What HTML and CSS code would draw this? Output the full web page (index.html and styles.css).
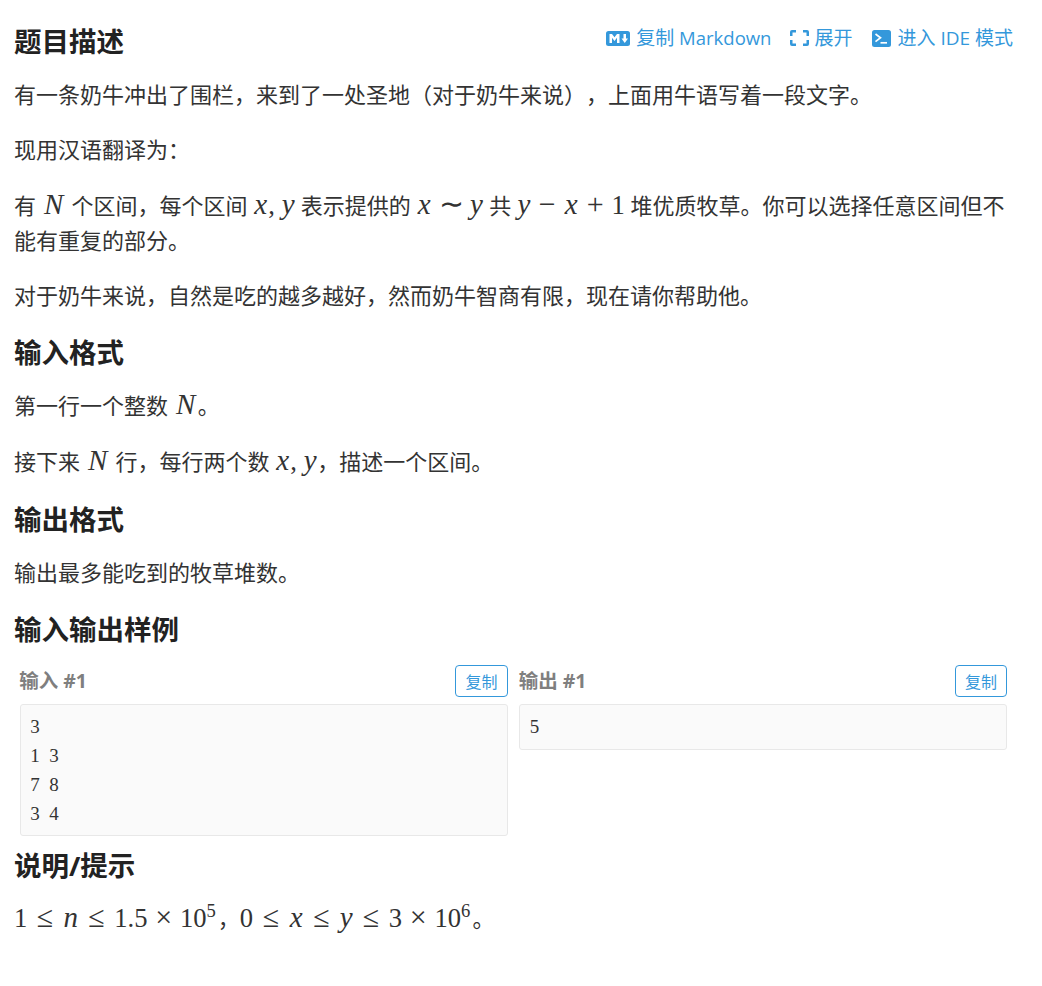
FILE: index.html
```html
<!DOCTYPE html>
<html lang="zh-CN">
<head>
<meta charset="utf-8">
<title>题目描述</title>
<link rel="stylesheet" href="styles.css">
</head>
<body>
<main class="problem">
  <header class="head">
    <h2>题目描述</h2>
    <nav class="tools">
      <a class="tool"><svg class="ico md" viewBox="0 0 24 15"><rect width="24" height="15" rx="2.500" fill="#3498db"/><path d="M3.500 12V3h2.500l2.500 3.300L11 3h2.500v9H11V6.800L8.500 10 6 6.800V12zM17.500 3h2.500v4.500h2L18.750 12 15.500 7.500h2z" fill="#fff"/></svg><span>复制 <span class="lat">Markdown</span></span></a>
      <a class="tool tool-expand"><svg class="ico ex" viewBox="0 0 19 16"><path d="M0 6V2a2 2 0 0 1 2-2h4v2.500H2.500V6zM13 0h4a2 2 0 0 1 2 2v4h-2.500V2.500H13zM19 10v4a2 2 0 0 1-2 2h-4v-2.500h3.500V10zM6 16H2a2 2 0 0 1-2-2v-4h2.500v3.500H6z" fill="#3498db"/></svg><span>展开</span></a>
      <a class="tool"><svg class="ico tm" viewBox="0 0 19 17"><rect width="19" height="17" rx="2.500" fill="#3498db"/><path d="M3.500 4 8.500 7.800 3.500 11.600" fill="none" stroke="#fff" stroke-width="1.700"/><path d="M8.500 12.800h6.500" stroke="#fff" stroke-width="1.700"/></svg><span>进入 IDE 模式</span></a>
    </nav>
  </header>
  <p>有一条奶牛冲出了围栏，来到了一处圣地（对于奶牛来说），上面用牛语写着一段文字。</p>
  <p>现用汉语翻译为：</p>
  <p>有 <i class="m vN">N</i> 个区间，每个区间 <i class="m vx">x</i><span class="r comma">,</span><i class="m vy">y</i> 表示提供的 <i class="m vx">x</i><span class="r rel tilde">∼</span><i class="m vy">y</i> 共 <i class="m vy">y</i><span class="r bin sum">−</span><i class="m vx">x</i><span class="r bin sum">+</span><span class="r">1</span> 堆优质牧草。你可以选择任意区间但不能有重复的部分。</p>
  <p>对于奶牛来说，自然是吃的越多越好，然而奶牛智商有限，现在请你帮助他。</p>
  <h2>输入格式</h2>
  <p>第一行一个整数 <i class="m vN">N</i>。</p>
  <p class="tall">接下来 <i class="m vN">N</i> 行，每行两个数 <i class="m vx">x</i><span class="r comma">,</span><i class="m vy">y</i>，描述一个区间。</p>
  <h2>输出格式</h2>
  <p>输出最多能吃到的牧草堆数。</p>
  <h2>输入输出样例</h2>
  <section class="samples">
    <div class="sample">
      <div class="sample-head"><h3>输入 #1</h3><button class="copy">复制</button></div>
      <pre class="code">3
1 3
7 8
3 4</pre>
    </div>
    <div class="sample">
      <div class="sample-head"><h3>输出 #1</h3><button class="copy">复制</button></div>
      <pre class="code">5</pre>
    </div>
  </section>
  <h2 class="note">说明/提示</h2>
  <p class="last"><span class="r">1</span><span class="r rel">≤</span><i class="m vn">n</i><span class="r rel">≤</span><span class="r">1.5</span><span class="r bin">×</span><span class="r">10<sup>5</sup></span>，<span class="r">0</span><span class="r rel">≤</span><i class="m vx">x</i><span class="r rel">≤</span><i class="m vy">y</i><span class="r rel">≤</span><span class="r">3</span><span class="r bin">×</span><span class="r">10<sup>6</sup></span>。</p>
</main>
</body>
</html>
```

FILE: styles.css
```css
* { box-sizing: border-box; }
html, body { margin: 0; padding: 0; background: #fff; }
body {
  font-family: "Open Sans", "Noto Sans CJK SC", sans-serif;
  font-size: 22px;
  line-height: 35.2px;
  color: #333;
  text-spacing-trim: space-all;
}
.problem { width: 1013px; padding: 22px 0 0 14px; }
h2 {
  margin: 22px 0 18px;
  font-size: 27.500px;
  line-height: 35.200px;
  font-weight: 700;
  color: #222;
}
.head h2 { margin-top: 2px; }
.note { margin: 12px 0 17px; }
p { margin: 0 0 20px; }
.tall { padding-bottom: 1px; }
.head { display: flex; justify-content: space-between; align-items: flex-start; }
.tools { display: flex; gap: 19px; font-size: 19px; line-height: 31px; color: #3498db; }
.tool { display: flex; align-items: center; gap: 6px; }
.tool-expand { gap: 5px; margin-right: 1px; }
.lat { font-size: 18.500px; }
.ico { display: block; flex: none; }
.md { width: 24px; height: 15px; }
.ex { width: 19px; height: 16px; }
.tm { width: 19px; height: 17px; }
.m, .r { font-family: "Liberation Serif", serif; font-size: 26.600px; line-height: 1; color: #333; }
.m { display: inline-block; font-size: 29px; text-align: center; }
.vx { width: 15.200px; }
.vy { width: 14px; }
.vN { width: 24px; }
.vn { width: 16px; }
.rel, .bin { display: inline-block; width: 20.700px; text-align: center; font-size: 30px; }
.rel { margin: 0 7.400px; }
.bin { margin: 0 5.900px; }
.tilde { width: 23px; }
.sum { margin: 0 6px; }
.comma { display: inline-block; width: 7.400px; margin-right: 5.400px; }
sup { font-size: 18.600px; line-height: 0; vertical-align: 10px; margin-right: 2px; }
.samples { display: grid; grid-template-columns: 488px 488px; gap: 11.500px; margin: 0 0 0 5.700px; align-items: start; }
.sample-head { display: flex; justify-content: space-between; align-items: center; height: 32px; margin-bottom: 7px; }
h3 { margin: 0 0 0 -0.500px; font-size: 19.500px; line-height: 32px; font-weight: 700; color: #7f7f7f; }
.copy {
  width: 52.600px;
  height: 32px;
  padding: 0;
  border: 1px solid #3498db;
  border-radius: 4px;
  background: #fff;
  color: #3498db;
  font: 16px/30px "Noto Sans CJK SC", sans-serif;
}
.code {
  margin: 0;
  padding: 7.700px 9.500px 7px;
  background: #fafafa;
  border: 1px solid #e8e8e8;
  border-radius: 3px;
  font-family: "Liberation Serif", serif;
  font-size: 19px;
  line-height: 28.800px;
  word-spacing: 4.750px;
  color: #333;
}
```
